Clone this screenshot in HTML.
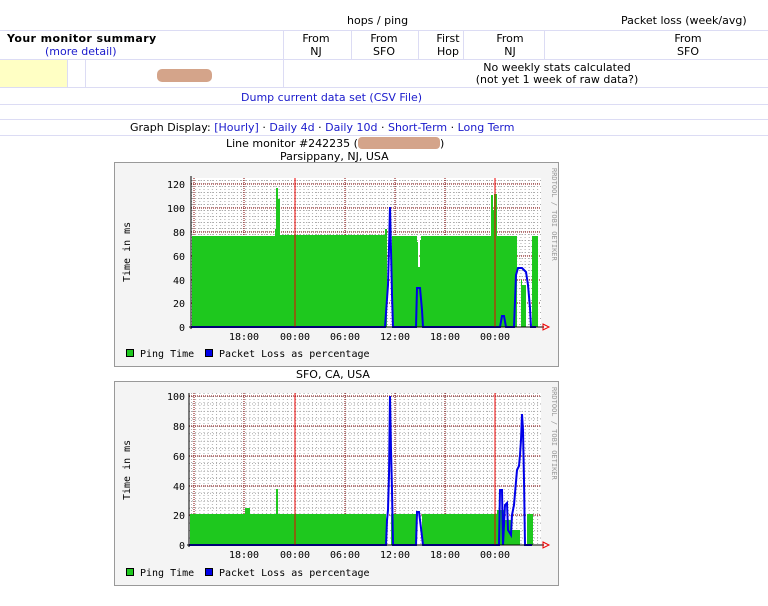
<!DOCTYPE html>
<html><head><meta charset="utf-8"><style>
body{margin:0;width:768px;height:606px;background:#fff;font-family:"DejaVu Sans","Liberation Sans",sans-serif;font-size:11px;color:#000;position:relative;overflow:hidden}
.a{position:absolute;white-space:nowrap}
.hl{position:absolute;left:0;width:768px;height:1px;background:#dcdcf4}
.vl{position:absolute;width:1px;background:#dcdcf4}
.c{text-align:center}
a,.lk{color:#1a1acc;text-decoration:none}
</style></head><body>
<div class="a" style="left:347px;top:14px">hops / ping</div>
<div class="a" style="left:621px;top:14px">Packet loss (week/avg)</div>
<div class="hl" style="top:30px"></div>
<div class="a" style="left:7px;top:32px;font-weight:bold;letter-spacing:0.4px">Your monitor summary</div>
<div class="a lk" style="left:45px;top:45px">(more detail)</div>
<div class="vl" style="left:283px;top:31px;height:57px"></div>
<div class="vl" style="left:351px;top:31px;height:28px"></div>
<div class="vl" style="left:418px;top:31px;height:28px"></div>
<div class="vl" style="left:463px;top:31px;height:28px"></div>
<div class="vl" style="left:544px;top:31px;height:28px"></div>
<div class="a c" style="left:290px;width:52px;top:32px;line-height:13px">From<br>NJ</div>
<div class="a c" style="left:358px;width:52px;top:32px;line-height:13px">From<br>SFO</div>
<div class="a c" style="left:422px;width:52px;top:32px;line-height:13px">First<br>Hop</div>
<div class="a c" style="left:484px;width:52px;top:32px;line-height:13px">From<br>NJ</div>
<div class="a c" style="left:662px;width:52px;top:32px;line-height:13px">From<br>SFO</div>
<div class="hl" style="top:59px"></div>
<div class="a" style="left:0;top:60px;width:67px;height:27px;background:#ffffc4"></div>
<div class="vl" style="left:67px;top:60px;height:27px"></div>
<div class="vl" style="left:85px;top:60px;height:27px"></div>
<div class="a" style="left:157px;top:69px;width:55px;height:13px;background:#d4a48a;border-radius:5px"></div>
<div class="a c" style="left:467px;width:180px;top:62px;line-height:12px">No weekly stats calculated<br>(not yet 1 week of raw data?)</div>
<div class="hl" style="top:87px"></div>
<div class="a lk" style="left:241px;top:91px">Dump current data set (CSV File)</div>
<div class="hl" style="top:104px"></div>
<div class="hl" style="top:119px"></div>
<div class="a" style="left:130px;top:121px">Graph Display: <span class="lk">[Hourly]</span> · <span class="lk">Daily 4d</span> · <span class="lk">Daily 10d</span> · <span class="lk">Short-Term</span> · <span class="lk">Long Term</span></div>
<div class="hl" style="top:135px"></div>
<div class="a" style="left:226px;top:137px">Line monitor #242235 (<span style="display:inline-block;width:82px;height:12px;background:#d4a48a;border-radius:4px;vertical-align:-2px"></span>)</div>
<div class="a" style="left:280px;top:150px">Parsippany, NJ, USA</div>
<div class="a" style="left:296px;top:368px">SFO, CA, USA</div>

<svg class="a" style="left:0;top:0" width="768" height="606" font-family="DejaVu Sans Mono,Liberation Mono,monospace" font-size="10">
<defs>
<pattern id="gv" x="191" y="0" width="4.17" height="3" patternUnits="userSpaceOnUse"><rect x="0" y="0" width="1" height="1" fill="#aaa"/></pattern>
<pattern id="gh" x="0" y="0" width="3" height="6" patternUnits="userSpaceOnUse"><rect x="0" y="0" width="1" height="1" fill="#aaa"/></pattern>
<pattern id="gh2" x="0" y="396" width="3" height="7.45" patternUnits="userSpaceOnUse"><rect x="0" y="0" width="1" height="1" fill="#aaa"/></pattern>
</defs>
<!-- Graph 1 -->
<rect x="114.5" y="162.5" width="444" height="204" fill="#f4f4f4" stroke="#999"/>
<rect x="191" y="178" width="350" height="149" fill="#fff"/>
<rect x="191" y="178" width="350" height="149" fill="url(#gv)"/>
<rect x="191" y="178" width="350" height="149" fill="url(#gh)"/>
<g stroke="#800000" stroke-dasharray="1,1">
<line x1="191" y1="184" x2="541" y2="184"/><line x1="191" y1="208" x2="541" y2="208"/><line x1="191" y1="232" x2="541" y2="232"/><line x1="191" y1="256" x2="541" y2="256"/><line x1="191" y1="280" x2="541" y2="280"/><line x1="191" y1="303" x2="541" y2="303"/>
<line x1="194" y1="178" x2="194" y2="327"/><line x1="244" y1="178" x2="244" y2="327"/><line x1="345" y1="178" x2="345" y2="327"/><line x1="395" y1="178" x2="395" y2="327"/><line x1="445" y1="178" x2="445" y2="327"/>
</g>
<path d="M192,327 V236 H275 V229 H276 V188 H278 V199 H280 V235 H385 V229 H387 V327 H392 V236 H417 V242 H418 V267 H420 V240 H421 V236 H491 V195 H493 V210 H494 V194 H497 V236 H517 V327 H521 V280 H522 V285 H526 V327 H532 V236 H538 V327 Z" fill="#1ec81e"/>
<path d="M191,327 H385 L388,285 L389,248 L390,207 L391,250 L392,295 L393,327 H416 L417,288 L420,288 L422,310 L423,327 H500 L502,316 L504,316 L506,327 H514 L516,275 L518,268 L522,268 L524,270 L526,272 L528,285 L530,308 L531,327 H536" fill="none" stroke="#0000e8" stroke-width="2"/>
<line x1="295" y1="178" x2="295" y2="327" stroke="#e00" /><line x1="495" y1="178" x2="495" y2="327" stroke="#e00"/>
<line x1="189" y1="327" x2="544" y2="327" stroke="#000"/><line x1="191" y1="176" x2="191" y2="329" stroke="#000"/>
<path d="M543,324 L549,327 L543,330 Z" fill="none" stroke="#e00"/>
<g text-anchor="end"><text x="185" y="188">120</text><text x="185" y="212">100</text><text x="185" y="236">80</text><text x="185" y="260">60</text><text x="185" y="284">40</text><text x="185" y="307">20</text><text x="185" y="331">0</text></g>
<g text-anchor="middle"><text x="244" y="340">18:00</text><text x="295" y="340">00:00</text><text x="345" y="340">06:00</text><text x="395" y="340">12:00</text><text x="445" y="340">18:00</text><text x="495" y="340">00:00</text></g>
<text transform="translate(130,282) rotate(-90)">Time in ms</text>
<text transform="translate(552,168) rotate(90)" font-size="7" fill="#999">RRDTOOL / TOBI OETIKER</text>
<rect x="126.5" y="349.5" width="7" height="7" fill="#1ec81e" stroke="#000"/><text x="140" y="357">Ping Time</text>
<rect x="205.5" y="349.5" width="7" height="7" fill="#0000e8" stroke="#000"/><text x="219" y="357">Packet Loss as percentage</text>

<!-- Graph 2 -->
<rect x="114.5" y="381.5" width="444" height="204" fill="#f4f4f4" stroke="#999"/>
<rect x="189" y="393" width="352" height="152" fill="#fff"/>
<rect x="189" y="393" width="352" height="152" fill="url(#gv)"/>
<rect x="189" y="393" width="352" height="152" fill="url(#gh2)"/>
<g stroke="#800000" stroke-dasharray="1,1">
<line x1="189" y1="396" x2="541" y2="396"/><line x1="189" y1="426" x2="541" y2="426"/><line x1="189" y1="456" x2="541" y2="456"/><line x1="189" y1="486" x2="541" y2="486"/><line x1="189" y1="515" x2="541" y2="515"/>
<line x1="194" y1="393" x2="194" y2="545"/><line x1="244" y1="393" x2="244" y2="545"/><line x1="345" y1="393" x2="345" y2="545"/><line x1="395" y1="393" x2="395" y2="545"/><line x1="445" y1="393" x2="445" y2="545"/>
</g>
<path d="M190,545 V514 H245 V508 H250 V514 H276 V489 H278 V514 H386 V545 H391 V514 H416 V545 H422 V514 H497 V510 H505 V520 H512 V530 H520 V545 H527 V514 H533 V545 Z" fill="#1ec81e"/>
<path d="M189,545 H386 L387,520 L388,510 L389,475 L390,396 L391,450 L392,490 L393,545 H416 L417,512 L419,512 L421,528 L423,545 H499 L500,490 L502,490 L503,545 L505,505 L507,503 L508,530 L511,535 L512,515 L514,505 L517,470 L519,466 L520,455 L521,440 L522,414 L523,430 L524,480 L525,545 H532" fill="none" stroke="#0000e8" stroke-width="2"/>
<line x1="295" y1="393" x2="295" y2="545" stroke="#e00"/><line x1="495" y1="393" x2="495" y2="545" stroke="#e00"/>
<line x1="187" y1="545" x2="544" y2="545" stroke="#000"/><line x1="189" y1="393" x2="189" y2="547" stroke="#000"/>
<path d="M543,542 L549,545 L543,548 Z" fill="none" stroke="#e00"/>
<g text-anchor="end"><text x="185" y="400">100</text><text x="185" y="430">80</text><text x="185" y="460">60</text><text x="185" y="490">40</text><text x="185" y="519">20</text><text x="185" y="549">0</text></g>
<g text-anchor="middle"><text x="244" y="558">18:00</text><text x="295" y="558">00:00</text><text x="345" y="558">06:00</text><text x="395" y="558">12:00</text><text x="445" y="558">18:00</text><text x="495" y="558">00:00</text></g>
<text transform="translate(130,500) rotate(-90)">Time in ms</text>
<text transform="translate(552,387) rotate(90)" font-size="7" fill="#999">RRDTOOL / TOBI OETIKER</text>
<rect x="126.5" y="568.5" width="7" height="7" fill="#1ec81e" stroke="#000"/><text x="140" y="576">Ping Time</text>
<rect x="205.5" y="568.5" width="7" height="7" fill="#0000e8" stroke="#000"/><text x="219" y="576">Packet Loss as percentage</text>
</svg>
</body></html>
